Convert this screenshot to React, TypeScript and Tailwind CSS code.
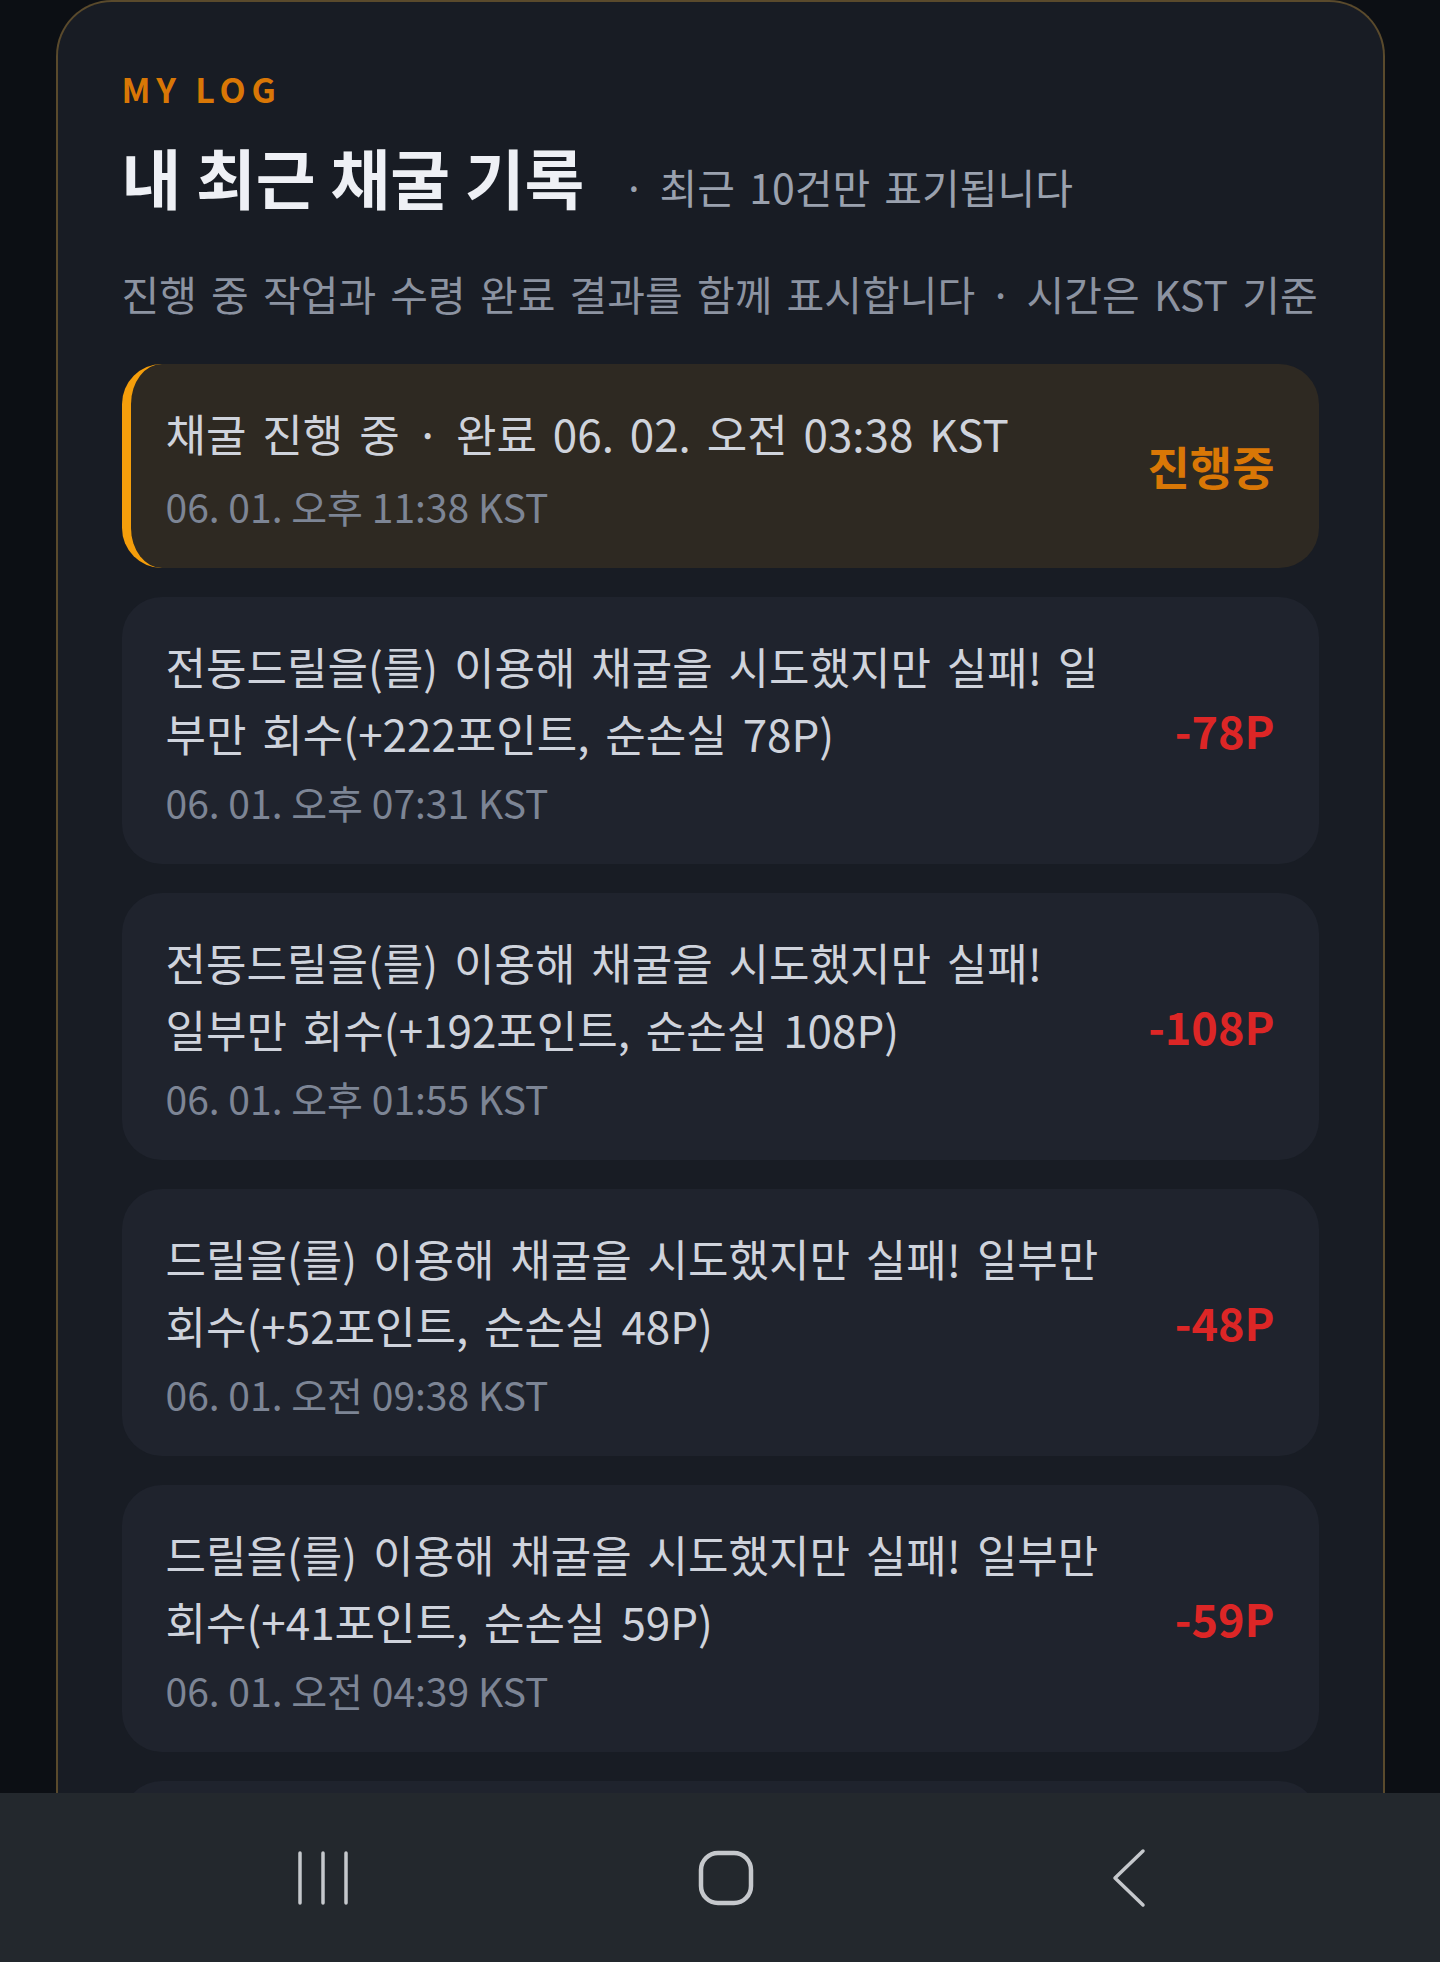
import React from 'react'

type LogItem = {
  title: string
  time: string
  amount: string
  pending?: boolean
}

const logs: LogItem[] = [
  {
    title: '채굴 진행 중 · 완료 06. 02. 오전 03:38 KST',
    time: '06. 01. 오후 11:38 KST',
    amount: '진행중',
    pending: true,
  },
  {
    title: '전동드릴을(를) 이용해 채굴을 시도했지만 실패! 일부만 회수(+222포인트, 순손실 78P)',
    time: '06. 01. 오후 07:31 KST',
    amount: '-78P',
  },
  {
    title: '전동드릴을(를) 이용해 채굴을 시도했지만 실패! 일부만 회수(+192포인트, 순손실 108P)',
    time: '06. 01. 오후 01:55 KST',
    amount: '-108P',
  },
  {
    title: '드릴을(를) 이용해 채굴을 시도했지만 실패! 일부만 회수(+52포인트, 순손실 48P)',
    time: '06. 01. 오전 09:38 KST',
    amount: '-48P',
  },
  {
    title: '드릴을(를) 이용해 채굴을 시도했지만 실패! 일부만 회수(+41포인트, 순손실 59P)',
    time: '06. 01. 오전 04:39 KST',
    amount: '-59P',
  },
]

function LogCard({ item }: { item: LogItem }) {
  return (
    <div
      className={
        item.pending
          ? 'flex items-center gap-[64px] rounded-[40px] border-l-[9px] border-[#f59e0b] bg-[#2e2922] py-[36px] pl-[35px] pr-[44px]'
          : 'flex items-center gap-[64px] rounded-[40px] bg-[#1f232d] py-[36px] pl-[44px] pr-[44px]'
      }
    >
      <div className="min-w-0 flex-1">
        <p className="text-[44px] leading-[67px] text-[#cfd3dc] [word-spacing:6px]">{item.title}</p>
        <p
          className={
            item.pending
              ? 'mt-[13px] text-[39px] leading-[52px] text-[#7d8595]'
              : 'mt-[9px] text-[39px] leading-[52px] text-[#7d8595]'
          }
        >
          {item.time}
        </p>
      </div>
      <span
        className={
          item.pending
            ? 'shrink-0 text-[46px] font-bold text-[#d97706]'
            : 'shrink-0 text-[45px] font-bold text-[#dc2626]'
        }
      >
        {item.amount}
      </span>
    </div>
  )
}

export default function App() {
  return (
    <div
      className="flex h-[1962px] w-[1440px] flex-col overflow-hidden bg-[#0c0f14]"
      style={{ fontFamily: '"Noto Sans CJK KR", "Noto Sans", sans-serif' }}
    >
      {/* Log panel */}
      <div className="flex h-[1793px] justify-center overflow-hidden">
        <div className="w-[1329px] shrink-0 rounded-t-[56px] border-2 border-b-0 border-[#5a4a2c] bg-[#181c24] px-[64px] pt-[67px]">
          <div className="text-[34px] font-bold leading-[40px] tracking-[0.17em] text-[#d97706]">MY LOG</div>

          <div className="mt-[29px] flex items-baseline">
            <h2 className="text-[65px] font-bold leading-[76px] text-[#eef0f5]">내 최근 채굴 기록</h2>
            <span className="ml-[38px] text-[41px] text-[#9aa1ae] [word-spacing:5px]">· 최근 10건만 표기됩니다</span>
          </div>

          <p className="mt-[48px] text-[41px] leading-[54px] text-[#8c93a1] [word-spacing:5px]">
            진행 중 작업과 수령 완료 결과를 함께 표시합니다 · 시간은 KST 기준
          </p>

          <div className="mt-[44px] flex flex-col gap-[29px]">
            {logs.map((item, i) => (
              <LogCard key={i} item={item} />
            ))}
            {/* next entry, scrolled below the fold */}
            <div className="h-[266px] rounded-[40px] bg-[#1f232d]" />
          </div>
        </div>
      </div>

      {/* Android navigation bar */}
      <div className="grid h-[169px] grid-cols-3 items-center bg-[#23282d] pl-[122px] pr-[110px]">
        <div className="flex justify-center">
          <svg width="52" height="56" viewBox="0 0 52 56" fill="none" stroke="#c5c8cc" strokeWidth="3.5" strokeLinecap="round">
            <line x1="3" y1="3" x2="3" y2="53" />
            <line x1="26" y1="3" x2="26" y2="53" />
            <line x1="49" y1="3" x2="49" y2="53" />
          </svg>
        </div>
        <div className="flex justify-center">
          <svg width="56" height="56" viewBox="0 0 56 56" fill="none" stroke="#c5c8cc" strokeWidth="4.5">
            <rect x="3" y="3" width="50" height="50" rx="17" />
          </svg>
        </div>
        <div className="flex justify-center">
          <svg width="40" height="60" viewBox="0 0 40 60" fill="none" stroke="#c5c8cc" strokeWidth="3.5" strokeLinecap="round" strokeLinejoin="round">
            <polyline points="34,3 6,30 34,57" />
          </svg>
        </div>
      </div>
    </div>
  )
}
